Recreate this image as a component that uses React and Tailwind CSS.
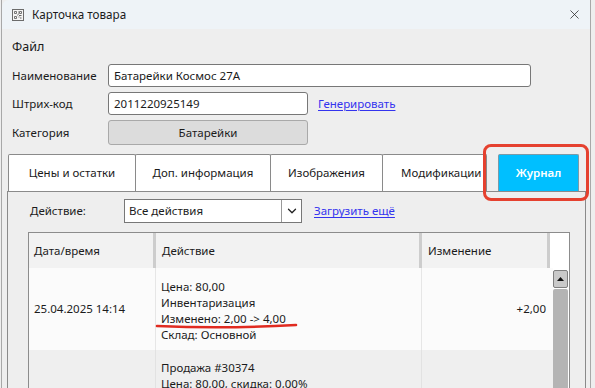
import { X, ChevronDown } from 'lucide-react'

const tabs = [
  { label: 'Цены и остатки', w: 'w-[128px]' },
  { label: 'Доп. информация', w: 'w-[136px]' },
  { label: 'Изображения', w: 'w-[113px]' },
]

const AppIcon = () => (
  <svg width="12" height="12" viewBox="0 0 12 12" className="shrink-0">
    <rect x="0.5" y="0.5" width="11" height="11" fill="#f4f4f4" stroke="#6b6b6b" />
    <path d="M2.5 2.5h2v2h-2zM7.5 2.5h2v2h-2zM2.5 7.5h2v2h-2z" fill="none" stroke="#555" strokeWidth="0.8" />
    <path d="M6 3h0.8M6 5h1M7 6.5h2.5M6.5 8h1M8 9h1.5M5 6h0.8" stroke="#555" strokeWidth="0.9" />
  </svg>
)

const App = () => {
  return (
    <div className="relative w-[595px] h-[388px] overflow-hidden bg-[#eeeeee] font-['Noto_Sans',sans-serif] text-[11.5px] text-[#1b1b1b]">
      <div className="ml-[1px] w-[590px] h-full border-l border-r border-[#a8a8a8] flex flex-col">
        {/* Title bar */}
        <div className="h-[29px] shrink-0 flex items-center pl-[10px] pr-[8px] bg-[#eef3f7] rounded-tl-[7px]">
          <AppIcon />
          <span className="ml-[8px] text-[11.7px]">Карточка товара</span>
          <div className="flex-1" />
          <X size={15} strokeWidth={1.2} className="text-[#222]" />
        </div>

        {/* Form */}
        <div className="pl-[10px]">
          <div className="pt-[9px] h-[26px] leading-[18px] text-[12.5px]">Файл</div>
          <div className="mt-[9px] flex items-center h-[23px]">
            <div className="w-[96px]">Наименование</div>
            <div className="w-[423px] h-[23px] border border-[#777] rounded-[3px] bg-white flex items-center pl-[5px]">
              Батарейки Космос 27А
            </div>
          </div>
          <div className="mt-[5px] flex items-center h-[23px]">
            <div className="w-[96px]">Штрих-код</div>
            <div className="w-[200px] h-[23px] border border-[#777] rounded-[3px] bg-white flex items-center pl-[5px]">
              2011220925149
            </div>
            <span className="ml-[10px] text-[#3333ee] underline underline-offset-2">Генерировать</span>
          </div>
          <div className="mt-[5px] flex items-center h-[25px]">
            <div className="w-[96px]">Категория</div>
            <div className="w-[200px] h-[25px] border border-[#a9a9a9] rounded-[3px] bg-[#dcdcdc] flex items-center justify-center">
              Батарейки
            </div>
          </div>
        </div>

        {/* Tabs */}
        <div className="mt-[9px] pl-[5px] flex-1 flex flex-col">
          <div className="flex h-[37px] pl-[1px]">
            {tabs.map((t, i) => (
              <div
                key={t.label}
                className={`${t.w} ${i > 0 ? '-ml-px' : ''} h-full bg-white border border-b-0 border-[#8a8a8a] rounded-t-[2px] flex items-center justify-center`}
              >
                {t.label}
              </div>
            ))}
            <div className="w-[105px] -ml-px h-full bg-white border border-b-0 border-[#8a8a8a] rounded-t-[2px] flex items-center pl-[18px] overflow-hidden whitespace-nowrap">
              Модификации
            </div>
            <div className="w-[81px] ml-[11px] h-full bg-[#00bfff] border border-b-0 border-[#7a9aa8] rounded-t-[2px] flex items-center justify-center text-white font-semibold">
              Журнал
            </div>
          </div>

          <div className="w-[579px] flex-1 border-t border-l border-r border-[#8a8a8a] pl-[20px] pr-[15px] pt-[7px]">
            <div className="flex items-center h-[24px]">
              <div className="w-[96px] pl-[2px]">Действие:</div>
              <div className="w-[178px] h-[24px] border border-[#777] bg-white flex">
                <div className="flex-1 flex items-center pl-[4px]">Все действия</div>
                <div className="w-[20px] border-l border-[#999] flex items-center justify-center">
                  <ChevronDown size={14} strokeWidth={2.2} className="text-[#222]" />
                </div>
              </div>
              <span className="ml-[12px] text-[#3333ee] underline underline-offset-2">Загрузить ещё</span>
            </div>

            {/* Grid */}
            <div className="mt-[9px] w-[542px] h-[200px] border border-[#8c8c8c] bg-white flex">
              <div className="w-[524px] flex flex-col">
                <div className="h-[35px] flex bg-[#f2f2f2] shrink-0">
                  <div className="w-[124px] flex items-center pl-[5px]">Дата/время</div>
                  <div className="w-[3px] bg-[#cdcdcd]" />
                  <div className="w-[263px] flex items-center pl-[6px]">Действие</div>
                  <div className="w-[3px] bg-[#cdcdcd]" />
                  <div className="w-[125px] flex items-center pl-[6px]">Изменение</div>
                  <div className="w-[3px] bg-[#cdcdcd]" />
                  <div className="w-[3px] bg-white" />
                </div>

                <div className="h-[82px] flex bg-[#fbfbfb] shrink-0">
                  <div className="w-[126px] flex items-center pl-[5px]">25.04.2025 14:14</div>
                  <div className="w-px bg-[#e6e6e6]" />
                  <div className="w-[265px] pt-[11px] pl-[5px] leading-[16px]">
                    <div>Цена: 80,00</div>
                    <div>Инвентаризация</div>
                    <div>Изменено: 2,00 -&gt; 4,00</div>
                    <div>Склад: Основной</div>
                  </div>
                  <div className="w-px bg-[#e6e6e6]" />
                  <div className="flex-1 flex items-center justify-end pr-[7px]">+2,00</div>
                </div>

                <div className="h-[84px] flex bg-[#efefef] shrink-0">
                  <div className="w-[126px] flex items-center pl-[5px]">12.03.2025 11:30</div>
                  <div className="w-px bg-[#e2e2e2]" />
                  <div className="w-[265px] pt-[10px] pl-[5px] leading-[16px]">
                    <div>Продажа #30374</div>
                    <div>Цена: 80,00, скидка: 0,00%</div>
                    <div>Количество: 2,00</div>
                    <div>Склад: Основной</div>
                  </div>
                  <div className="w-px bg-[#e2e2e2]" />
                  <div className="flex-1 flex items-center justify-end pr-[7px]">-2,00</div>
                </div>
              </div>

              {/* Scrollbar */}
              <div className="w-[16px] pr-[1px] bg-white flex flex-col">
                <div className="h-[37px] shrink-0" />
                <div className="h-[18px] shrink-0 bg-[#c9c9c9] border border-[#7f7f7f] rounded-[2px] flex items-center justify-center">
                  <svg width="7" height="4" viewBox="0 0 7 4">
                    <path d="M0 4L3.5 0L7 4z" fill="#111" />
                  </svg>
                </div>
                <div className="mt-[1px] flex-1 bg-[#b4b4b4] rounded-t-[2px]" />
              </div>
            </div>
          </div>
        </div>
      </div>

      {/* Highlight overlays */}
      <div className="absolute left-[483px] top-[144px] w-[106px] h-[57px] border-[3px] border-[#e5412f] rounded-[8px] pointer-events-none" />
      <svg className="absolute left-[155px] top-[321px] pointer-events-none" width="145" height="10" viewBox="0 0 145 10">
        <path d="M2 5 Q 70 8 141 4" fill="none" stroke="#e02b20" strokeWidth="2.6" strokeLinecap="round" />
      </svg>
    </div>
  )
}

export default App
